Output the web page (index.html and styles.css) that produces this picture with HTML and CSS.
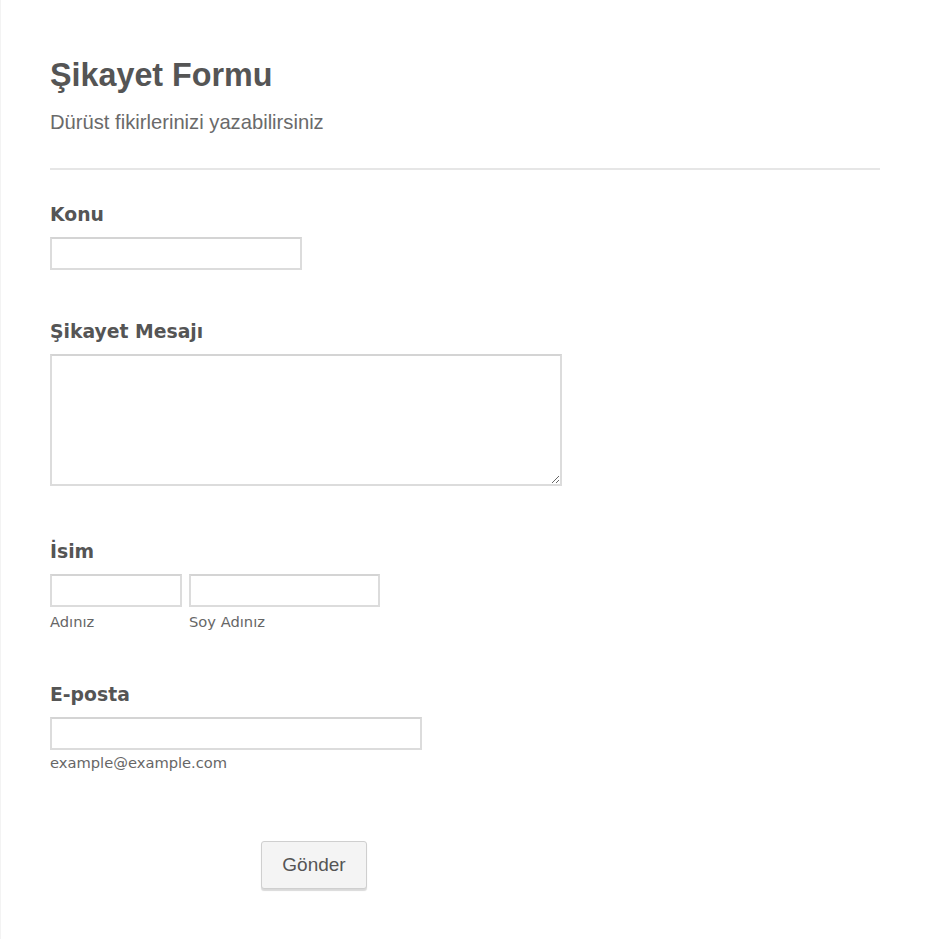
FILE: index.html
```html
<!DOCTYPE html>
<html lang="tr">

<head>
<meta charset="utf-8">
<title>Şikayet Formu</title>
<link rel="stylesheet" href="styles.css">
</head>

<body>
  <form class="form" onsubmit="return false">
    <div class="header">
      <h1 class="title">Şikayet Formu</h1>
      <p class="subtitle">Dürüst fikirlerinizi yazabilirsiniz</p>
    </div>

    <div class="field field-konu">
      <label class="label" for="konu">Konu</label>
      <input type="text" id="konu" class="input input-konu">
    </div>

    <div class="field field-mesaj">
      <label class="label" for="mesaj">Şikayet Mesajı</label>
      <textarea id="mesaj" class="input textarea"></textarea>
    </div>

    <div class="field field-isim">
      <label class="label" for="ad">İsim</label>
      <div class="name-row">
        <div class="name-part">
          <input type="text" id="ad" class="input input-first">
          <span class="sublabel">Adınız</span>
        </div>
        <div class="name-part">
          <input type="text" id="soyad" class="input input-last">
          <span class="sublabel">Soy Adınız</span>
        </div>
      </div>
    </div>

    <div class="field field-eposta">
      <label class="label" for="eposta">E-posta</label>
      <input type="email" id="eposta" class="input input-email">
      <span class="sublabel sublabel-email">example@example.com</span>
    </div>

    <div class="actions">
      <button type="submit" class="submit">Gönder</button>
    </div>
  </form>
</body>
</html>
```

FILE: styles.css
```css
/* page reset */
* {
    box-sizing: border-box;
}

body {
    margin: 0;
    background: #fff;
    color: #555;
}

/* the form sits against a very faint left rule */
.form {
    min-height: 939px;
    padding: 57px 50px 0 49px;
    border-left: 1px solid #f3f3f3;
}

/* title block */
.header {
    padding-bottom: 34px;
    border-bottom: 2px solid #e6e6e6;
}

.title {
    margin: 0;
    font-family: "Liberation Sans", Arial, sans-serif;
    font-size: 32.3px;
    font-weight: bold;
    line-height: 37px;
    color: #555;
}

.subtitle {
    margin: 17px 0 0 0;
    font-family: "Liberation Sans", Arial, sans-serif;
    font-size: 20.2px;
    line-height: 23px;
    color: #6a6a6a;
}

/* each question */
.field {
    display: flex;
    flex-direction: column;
    align-items: flex-start;
}

.field-konu {
    margin-top: 34px;
}

.field-mesaj {
    margin-top: 51px;
}

.field-isim {
    margin-top: 55px;
}

.field-eposta {
    margin-top: 54px;
}

.label {
    font-family: "DejaVu Sans", Verdana, sans-serif;
    font-size: 18.8px;
    font-weight: bold;
    line-height: 22px;
    color: #555;
    margin-bottom: 11px;
}

.input {
    display: block;
    height: 33px;
    margin: 0;
    padding: 4px 6px;
    border: 2px solid #dcdcdc;
    border-top-color: #d4d4d4;
    background: #fff;
    font-family: "DejaVu Sans", Verdana, sans-serif;
    font-size: 15px;
    color: #555;
    outline: none;
}

.input-konu {
    width: 252px;
}

.textarea {
    width: 512px;
    height: 132px;
    resize: both;
}

.input-email {
    width: 372px;
}

/* name has two parts side by side */
.name-row {
    display: flex;
    gap: 7px;
}

.name-part {
    display: flex;
    flex-direction: column;
}

.input-first {
    width: 132px;
}

.input-last {
    width: 191px;
}

.sublabel {
    margin-top: 6px;
    font-family: "DejaVu Sans", Verdana, sans-serif;
    font-size: 14.7px;
    line-height: 17px;
    color: #666;
}

.sublabel-email {
    margin-top: 4px;
}

/* submit button */
.actions {
    margin-top: 70px;
    padding-left: 211px;
}

.submit {
    width: 106px;
    height: 48px;
    padding: 0;
    border: 1px solid #cfcfcf;
    border-radius: 3px;
    background: #f4f4f4;
    box-shadow: 0 2px 1px rgba(0, 0, 0, 0.15);
    font-family: "Liberation Sans", Arial, sans-serif;
    font-size: 19px;
    color: #555;
    cursor: pointer;
}

.submit:hover {
    background: #ececec;
}
```
